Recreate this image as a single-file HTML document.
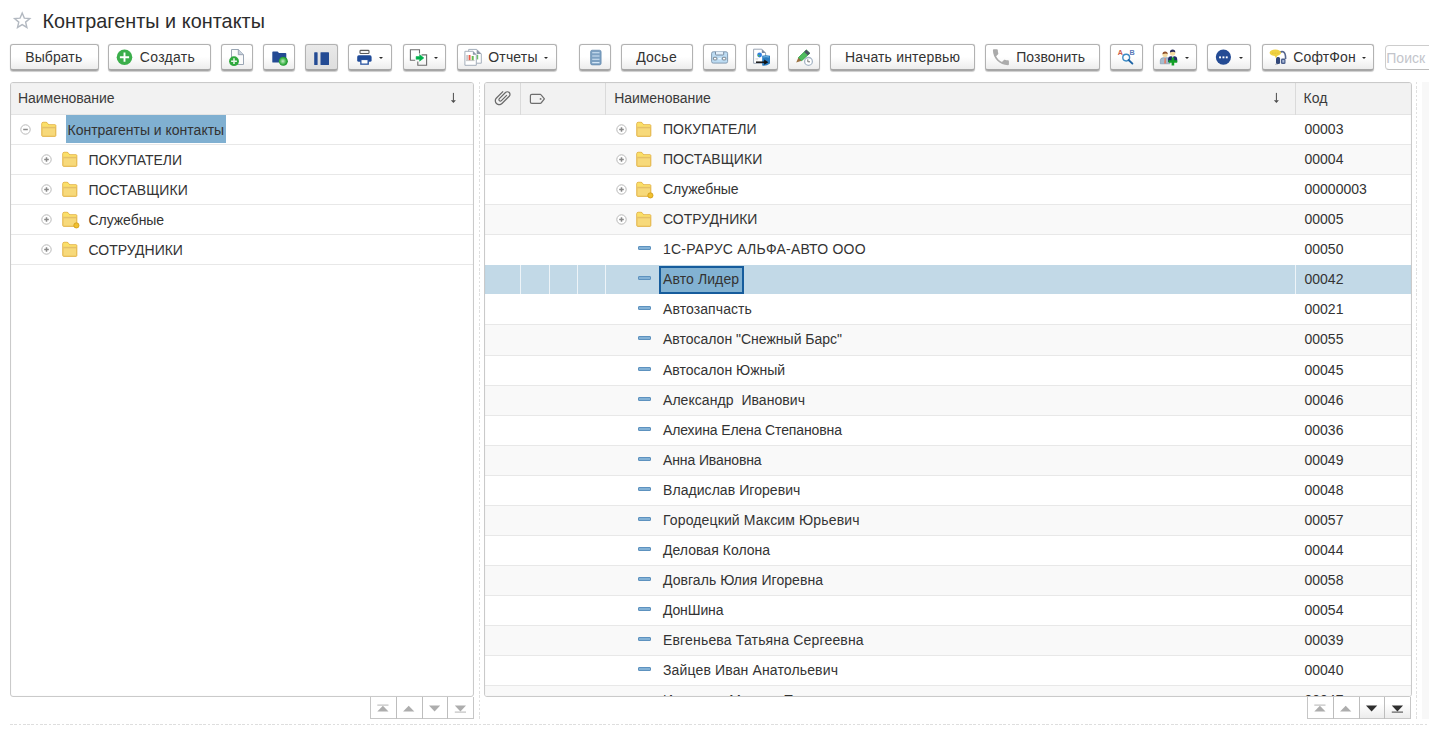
<!DOCTYPE html>
<html><head><meta charset="utf-8">
<style>
*{box-sizing:border-box}
html,body{margin:0;padding:0}
body{width:1429px;height:733px;overflow:hidden;background:#fff;position:relative;font-family:"Liberation Sans",sans-serif;font-size:14px;color:#333}
.a{position:absolute}
.t{position:absolute;white-space:pre;line-height:16px;font-size:14px}
.btn{position:absolute;top:44px;height:27px;border:1px solid #b2b2b2;border-bottom:2px solid #a6a6a6;border-radius:3px;background:linear-gradient(#fff 0,#fff 48%,#ededed 100%);box-shadow:0 0 0.8px rgba(0,0,0,0.22),0 0.6px 0.8px rgba(0,0,0,0.18)}
.btn.p{background:linear-gradient(#e9e9e9,#dedede)}
.dd{position:absolute;width:0;height:0;border-left:2.7px solid transparent;border-right:2.7px solid transparent;border-top:2.9px solid #2a2a2a;top:57.4px;margin-left:-0.2px}
.bt{position:absolute;top:49px;white-space:pre;line-height:16px;color:#333}
.tbl{position:absolute;top:82px;height:615px;border:1px solid #cacaca;border-radius:3px;background:#fff;overflow:hidden}
.hdr{position:absolute;left:0;right:0;top:0;height:32px;background:#f2f2f2;border-bottom:1px solid #e4e4e4}
.row{position:absolute;left:0;right:0;border-bottom:1px solid #e8e8e8}
.row.alt{background:#f9f9f9}
.sel{background:#c2d9e7}
.nav{position:absolute;top:696px;height:23px;border:1px solid #c4c4c4;border-top:none;background:#fff}
.nc{position:absolute;top:0;width:26px;height:22px;border-right:1px solid #c4c4c4}
</style></head><body>
<svg class="a" style="left:10px;top:9px;overflow:visible" width="25" height="22" viewBox="10 9 25 22"><path d="M22.20 13.00 L24.32 18.09 L29.81 18.53 L25.62 22.11 L26.90 27.47 L22.20 24.60 L17.50 27.47 L18.78 22.11 L14.59 18.53 L20.08 18.09 Z" fill="none" stroke="#b3b9c1" stroke-width="1.4" stroke-linejoin="miter"/></svg>
<div class="t" style="left:42.5px;top:9px;font-size:19.8px;line-height:24px;letter-spacing:0.05px;color:#2c2c2c">Контрагенты и контакты</div>
<div class="btn" style="left:10px;width:89px"></div>
<div class="bt" style="left:25.2px;letter-spacing:0.1px">Выбрать</div>
<div class="btn" style="left:108px;width:103px"></div>
<svg class="a" style="left:115px;top:48px;overflow:visible" width="19" height="19" viewBox="115 48 19 19"><circle cx="124.5" cy="57.2" r="7.8" fill="#3bae4b"/><path d="M124.5 52.6v9.2M119.9 57.2h9.2" stroke="#fff" stroke-width="1.9"/></svg>
<div class="bt" style="left:139.8px;letter-spacing:0.3px">Создать</div>
<div class="btn" style="left:221px;width:32px"></div>
<svg class="a" style="left:228px;top:47px;overflow:visible" width="18" height="20" viewBox="228 47 18 20"><path d="M231.5 49.5H238.3L243.5 54.7V64.5H231.5Z" fill="#fbfbfb" stroke="#9aa6b4" stroke-width="1"/><path d="M238.3 49.5V54.7H243.5" fill="#c6d0dc" stroke="#8a96a6" stroke-width="0.8"/><circle cx="234" cy="61.2" r="4.9" fill="#2ea83c"/><path d="M234 58.3v5.8M231.1 61.2h5.8" stroke="#e8f5e8" stroke-width="1.5"/></svg>
<div class="btn" style="left:263px;width:32px"></div>
<svg class="a" style="left:270px;top:49px;overflow:visible" width="20" height="18" viewBox="270 49 20 18"><path d="M272.3 52.2Q272.3 51.4 273.1 51.4H277.6L279 53H285.5Q286.3 53 286.3 53.8V61.9Q286.3 62.6 285.5 62.6H273.1Q272.3 62.6 272.3 61.9Z" fill="#244b94"/><circle cx="283.3" cy="61.2" r="4.5" fill="url(#gb)"/><defs><radialGradient id="gb" cx="0.45" cy="0.5" r="0.55"><stop offset="0" stop-color="#c8ecc8"/><stop offset="0.6" stop-color="#45b84f"/><stop offset="1" stop-color="#0e8a20"/></radialGradient></defs></svg>
<div class="btn p" style="left:305px;width:33px"></div>
<svg class="a" style="left:312px;top:50px;overflow:visible" width="19" height="17" viewBox="312 50 19 17"><rect x="314.2" y="52.2" width="3.4" height="12.8" rx="0.6" fill="#244b94"/><rect x="320.5" y="52.2" width="8.5" height="12.8" rx="0.6" fill="#244b94"/></svg>
<div class="btn" style="left:348px;width:44px"></div>
<div class="dd" style="left:379.5px"></div>
<svg class="a" style="left:355px;top:48px;overflow:visible" width="19" height="19" viewBox="355 48 19 19"><rect x="360" y="50.4" width="9" height="3.1" rx="0.8" fill="#f4f4f4" stroke="#5a5a5a" stroke-width="1.1"/><rect x="357.2" y="55.3" width="14.4" height="6.5" rx="1.6" fill="#1f4a98"/><path d="M360.2 59.4H368.9V64.8H360.2Z" fill="#2b55a2"/><rect x="361.5" y="60.1" width="6" height="3.4" fill="#fff"/></svg>
<div class="btn" style="left:403px;width:43px"></div>
<div class="dd" style="left:434.2px"></div>
<svg class="a" style="left:408px;top:47px;overflow:visible" width="22" height="20" viewBox="408 47 22 20"><path d="M419.5 53.6V49.7H410.4V60.2H415.2" fill="none" stroke="#6c6c6c" stroke-width="1.1"/><path d="M421.6 54.9H426.6V65.3H417.8V61.4" fill="none" stroke="#6c6c6c" stroke-width="1.1"/><path d="M416.1 56.5H419.6V54.6L423.9 57.9L419.6 61.2V59.3H416.1Z" fill="#00b04c" stroke="#00b04c" stroke-width="0.5" stroke-linejoin="round"/></svg>
<div class="btn" style="left:457px;width:100px"></div>
<div class="bt" style="left:488.3px;letter-spacing:0.15px">Отчеты</div>
<div class="dd" style="left:544.5px"></div>
<svg class="a" style="left:462px;top:47px;overflow:visible" width="22" height="20" viewBox="462 47 22 20"><path d="M468.7 49.4H476.7L481.3 54V63.2H468.7Z" fill="#fff" stroke="#a4aebb" stroke-width="1"/><path d="M476.7 49.4V54H481.3" fill="#8c98a8"/><rect x="476.6" y="54.8" width="1.6" height="4.6" fill="#6cc06c"/><path d="M464.9 51.3H472.9L476.3 54.7V65.3H464.9Z" fill="#fff" stroke="#a4aebb" stroke-width="1"/><path d="M472.9 51.3V54.7H476.3Z" fill="#8c98a8"/><rect x="466.3" y="55" width="1.6" height="5.3" fill="#c4c4c4"/><rect x="468.6" y="55" width="1.9" height="5.3" fill="#ea5a48"/><rect x="471.7" y="56" width="2" height="4.3" fill="#66bb55"/><path d="M466 60.6H474.6" stroke="#bdbdbd" stroke-width="0.8"/></svg>
<div class="btn" style="left:579px;width:32px"></div>
<svg class="a" style="left:588px;top:48px;overflow:visible" width="16" height="19" viewBox="588 48 16 19"><rect x="590.6" y="50.2" width="10.5" height="14.7" rx="1.6" fill="#7da1c2"/><g stroke="#d4e6f6" stroke-width="1.1"><path d="M592.2 52.7H599.5M592.2 56H599.5M592.2 59.3H599.5M592.2 62.6H599.5"/></g><rect x="590.6" y="50.2" width="10.5" height="14.7" rx="1.6" fill="none" stroke="#6288ad" stroke-width="0.7"/></svg>
<div class="btn" style="left:621px;width:72px"></div>
<div class="bt" style="left:636.2px;letter-spacing:0.25px">Досье</div>
<div class="btn" style="left:703px;width:33px"></div>
<svg class="a" style="left:709px;top:49px;overflow:visible" width="22" height="17" viewBox="709 49 22 17"><rect x="711.6" y="51.8" width="16" height="11.3" rx="1.6" fill="#bddcf3" stroke="#7b93aa" stroke-width="0.9"/><path d="M715.5 51.8V54.2Q715.5 55 716.3 55H722.9Q723.7 55 723.7 54.2V51.8" fill="#e4f0fa" stroke="#6e8298" stroke-width="0.9"/><rect x="713.4" y="57.3" width="3.4" height="2.6" rx="0.6" fill="#fff" stroke="#6e7a86" stroke-width="0.9"/><rect x="722.4" y="57.3" width="3.4" height="2.6" rx="0.6" fill="#fff" stroke="#6e7a86" stroke-width="0.9"/><path d="M718.2 58.6H721" stroke="#f0f8ff" stroke-width="1.4"/></svg>
<div class="btn" style="left:746px;width:32px"></div>
<svg class="a" style="left:751px;top:47px;overflow:visible" width="22" height="21" viewBox="751 47 22 21"><path d="M753.6 49.2H761.8L765.6 53V63.3H753.6Z" fill="#fff" stroke="#9aa6b4" stroke-width="1"/><path d="M761.8 49.2V53H765.6" fill="#7888a0"/><circle cx="759.6" cy="55" r="2.4" fill="#2f7fe0"/><circle cx="758.6" cy="55.6" r="0.9" fill="#58c040"/><path d="M755.5 58.5H758.5M755.5 59.7H758" stroke="#d0d0d0" stroke-width="0.6"/><path d="M762.2 55.8Q766 54.6 770 55.8V63.5Q766 66.5 762.2 65.6Z" fill="#2a7bbf"/><path d="M763.2 57Q766 56.3 769 57" stroke="#7ec0ea" stroke-width="0.9" fill="none"/><path d="M756 62.2H765.2" stroke="#111" stroke-width="1.5"/><path d="M764.2 59.6L768.4 62.2L764.2 64.8Z" fill="#111"/></svg>
<div class="btn" style="left:788px;width:32px"></div>
<svg class="a" style="left:794px;top:47px;overflow:visible" width="22" height="20" viewBox="794 47 22 20"><path d="M796.2 62.6L798.4 57.6L801.7 60.7Z" fill="#9a7040"/><path d="M798.4 57.6L806.3 49.9L809.9 53.2L801.7 60.7Z" fill="#4fbd60" stroke="#229a3a" stroke-width="0.7"/><path d="M804.2 51.9L806.3 49.7L810 53.2L807.8 55.3Z" fill="#4a5263"/><circle cx="808.5" cy="61.4" r="3.9" fill="#fff" stroke="#a7b6c6" stroke-width="1.3"/><path d="M807.8 59.4V61.8H810" fill="none" stroke="#666" stroke-width="0.9"/></svg>
<div class="btn" style="left:830px;width:145px"></div>
<div class="bt" style="left:845px;letter-spacing:0.17px">Начать интервью</div>
<div class="btn" style="left:985px;width:115px"></div>
<div class="bt" style="left:1016.2px;letter-spacing:0.05px">Позвонить</div>
<svg class="a" style="left:991px;top:48px;overflow:visible" width="20" height="19" viewBox="991 48 20 19"><path d="M6.62 10.79c1.44 2.83 3.76 5.14 6.59 6.59l2.2-2.2c.27-.27.67-.36 1.02-.24 1.12.37 2.33.57 3.57.57.55 0 1 .45 1 1V20c0 .55-.45 1-1 1-9.39 0-17-7.61-17-17 0-.55.45-1 1-1h3.5c.55 0 1 .45 1 1 0 1.25.2 2.45.57 3.57.11.35.03.74-.25 1.02l-2.2 2.2z" transform="translate(992.9 49.2) scale(0.89) translate(-3 -3)" fill="#ababab"/></svg>
<div class="btn" style="left:1110px;width:33px"></div>
<svg class="a" style="left:1116px;top:47px;overflow:visible" width="20" height="19" viewBox="1116 47 20 19"><text x="1117.8" y="54.8" font-family="Liberation Sans" font-size="7.2" font-weight="bold" fill="#cc5a48">A</text><text x="1129.6" y="54.8" font-family="Liberation Sans" font-size="7.2" font-weight="bold" fill="#5a7ab8">B</text><circle cx="1126.2" cy="57.6" r="3.4" fill="none" stroke="#3b8ac4" stroke-width="1.4"/><path d="M1128.6 60L1132.4 63.6" stroke="#1d64a6" stroke-width="1.9" stroke-linecap="round"/></svg>
<div class="btn" style="left:1153px;width:44px"></div>
<div class="dd" style="left:1184.7px"></div>
<svg class="a" style="left:1158px;top:48px;overflow:visible" width="22" height="19" viewBox="1158 48 22 19"><path d="M1160.3 63.8V60.6Q1160.3 57.9 1163 57.7H1167.2Q1169.9 57.9 1169.9 60.6V63.8Z" fill="#a6bccf" stroke="#7890a8" stroke-width="0.6"/><path d="M1164.6 58L1165.7 58L1166.2 63.6H1164.1Z" fill="#e0806a"/><circle cx="1165.1" cy="54.6" r="2.6" fill="#f5dca4"/><path d="M1162.5 54.2Q1162.5 51.4 1165.1 51.4Q1167.7 51.4 1167.7 54.2Q1166.2 52.6 1162.5 54.2Z" fill="#8e4e2a"/><path d="M1168.1 62V59.3Q1168.1 56.4 1171 56.2H1174.3Q1177.2 56.4 1177.2 59.3V62Z" fill="#1f2868"/><path d="M1171.6 56.2L1172.7 58.2L1173.8 56.2Z" fill="#fff"/><circle cx="1172.6" cy="53.1" r="2.7" fill="#f5dca4"/><path d="M1169.9 52.4Q1170 49.6 1172.6 49.6Q1175.3 49.6 1175.3 52.4Q1173.6 51.2 1169.9 52.4Z" fill="#2b2b5c"/><path d="M1171.6 57.4H1174.2V60.2H1177.2V62.8H1174.2V65.6H1171.6V62.8H1168.6V60.2H1171.6Z" fill="#13a126"/></svg>
<div class="btn" style="left:1207px;width:44px"></div>
<div class="dd" style="left:1239.2px"></div>
<svg class="a" style="left:1214px;top:48px;overflow:visible" width="19" height="19" viewBox="1214 48 19 19"><circle cx="1223.4" cy="57.1" r="7.6" fill="#244b94"/><rect x="1219.1" y="56.4" width="1.9" height="1.9" fill="#fff"/><rect x="1222.5" y="56.4" width="1.9" height="1.9" fill="#fff"/><rect x="1225.8" y="56.4" width="1.9" height="1.9" fill="#fff"/></svg>
<div class="btn" style="left:1262px;width:112px"></div>
<div class="bt" style="left:1293.2px;letter-spacing:0.15px">СофтФон</div>
<div class="dd" style="left:1362.3px"></div>
<svg class="a" style="left:1268px;top:48px;overflow:visible" width="20" height="19" viewBox="1268 48 20 19"><path d="M1277.5 64.5Q1276.3 63.8 1275.2 64.4" stroke="#9a9a9a" stroke-width="0.8" fill="none"/><path d="M1279.5 52.6Q1281.5 51.2 1283.2 51.8Q1285.8 53 1285.6 59" fill="none" stroke="#56668e" stroke-width="1.6"/><rect x="1276" y="57.1" width="4.1" height="6.9" rx="1.6" fill="#34497a"/><rect x="1281" y="58.6" width="4.5" height="5.4" rx="1.3" fill="#4a5e8c"/><rect x="1282.3" y="60" width="2" height="2.6" fill="#a8b8d8"/><ellipse cx="1275.3" cy="52.7" rx="5.7" ry="3.1" fill="#f0d244"/><path d="M1274 55L1276 58.2L1277.6 55Z" fill="#f0d244"/><path d="M1272 53.2H1278.8" stroke="#c8a828" stroke-width="0.5" stroke-dasharray="0.8 0.8"/></svg>
<div class="a" style="left:1384.5px;top:45px;width:60px;height:25px;border:1px solid #cdcdcd;border-bottom:1.5px solid #bdbdbd;border-radius:4px;background:#fff"></div>
<div class="bt" style="left:1386.3px;top:49.8px;color:#c3c5cb">Поиск</div>
<div class="tbl" style="left:10px;width:464px">
<div class="hdr"></div>
<div class="t" style="left:7px;top:7px;letter-spacing:-0.05px;color:#3a3a3a">Наименование</div>
<svg class="a" style="left:436px;top:8px" width="10" height="14" viewBox="0 0 10 14"><path d="M6.4 1.9V9.5" stroke="#4a4a4a" stroke-width="1"/><path d="M3.9 9.2H8.9L6.4 11.9Z" fill="#4a4a4a"/></svg>
<div class="row" style="top:32px;height:30px"></div>
<svg class="a" style="left:9.1px;top:41.0px" width="11" height="11" viewBox="0 0 11 11"><circle cx="5.5" cy="5.5" r="4.7" fill="#fff" stroke="#b8b8b8" stroke-width="1"/><path d="M3.2 5.5h4.6" stroke="#8a8a8a" stroke-width="1.5"/></svg>
<svg class="a" style="left:29.5px;top:39.0px;overflow:visible" width="17" height="16" viewBox="0 0 17 16"><path d="M0.8 13.6V1.8Q0.8 0.3 2.2 0.3H4.9Q5.9 0.3 6.7 1.4L7.6 2.8H14.1Q14.8 2.8 14.8 3.5V13.6Q14.8 14.3 14.1 14.3H1.5Q0.8 14.3 0.8 13.6Z" fill="#f7d97a" stroke="#e2b03e" stroke-width="1"/><path d="M1.3 1.8Q1.3 0.8 2.2 0.8H4.9Q5.6 0.8 6.2 1.6L7.3 3.3H14.3V4.8H1.3Z" fill="#fbe068"/><rect x="1.3" y="4.8" width="13" height="1.5" fill="#e4c068"/></svg>
<div class="a" style="left:55px;top:32px;width:160px;height:28px;background:#80b0d1"></div>
<div class="t" style="left:56.5px;top:38.5px;letter-spacing:0px">Контрагенты и контакты</div>
<div class="row" style="top:62px;height:30px"></div>
<svg class="a" style="left:30.1px;top:71.0px" width="11" height="11" viewBox="0 0 11 11"><circle cx="5.5" cy="5.5" r="4.7" fill="#fff" stroke="#b8b8b8" stroke-width="1"/><path d="M3.2 5.5h4.6M5.5 3.2v4.6" stroke="#8a8a8a" stroke-width="1.5"/></svg>
<svg class="a" style="left:50.5px;top:69.0px;overflow:visible" width="17" height="16" viewBox="0 0 17 16"><path d="M0.8 13.6V1.8Q0.8 0.3 2.2 0.3H4.9Q5.9 0.3 6.7 1.4L7.6 2.8H14.1Q14.8 2.8 14.8 3.5V13.6Q14.8 14.3 14.1 14.3H1.5Q0.8 14.3 0.8 13.6Z" fill="#f7d97a" stroke="#e2b03e" stroke-width="1"/><path d="M1.3 1.8Q1.3 0.8 2.2 0.8H4.9Q5.6 0.8 6.2 1.6L7.3 3.3H14.3V4.8H1.3Z" fill="#fbe068"/><rect x="1.3" y="4.8" width="13" height="1.5" fill="#e4c068"/></svg>
<div class="t" style="left:77.5px;top:68.5px;letter-spacing:0px">ПОКУПАТЕЛИ</div>
<div class="row" style="top:92px;height:30px"></div>
<svg class="a" style="left:30.1px;top:101.0px" width="11" height="11" viewBox="0 0 11 11"><circle cx="5.5" cy="5.5" r="4.7" fill="#fff" stroke="#b8b8b8" stroke-width="1"/><path d="M3.2 5.5h4.6M5.5 3.2v4.6" stroke="#8a8a8a" stroke-width="1.5"/></svg>
<svg class="a" style="left:50.5px;top:99.0px;overflow:visible" width="17" height="16" viewBox="0 0 17 16"><path d="M0.8 13.6V1.8Q0.8 0.3 2.2 0.3H4.9Q5.9 0.3 6.7 1.4L7.6 2.8H14.1Q14.8 2.8 14.8 3.5V13.6Q14.8 14.3 14.1 14.3H1.5Q0.8 14.3 0.8 13.6Z" fill="#f7d97a" stroke="#e2b03e" stroke-width="1"/><path d="M1.3 1.8Q1.3 0.8 2.2 0.8H4.9Q5.6 0.8 6.2 1.6L7.3 3.3H14.3V4.8H1.3Z" fill="#fbe068"/><rect x="1.3" y="4.8" width="13" height="1.5" fill="#e4c068"/></svg>
<div class="t" style="left:77.5px;top:98.5px;letter-spacing:0.05px">ПОСТАВЩИКИ</div>
<div class="row" style="top:122px;height:30px"></div>
<svg class="a" style="left:30.1px;top:131.0px" width="11" height="11" viewBox="0 0 11 11"><circle cx="5.5" cy="5.5" r="4.7" fill="#fff" stroke="#b8b8b8" stroke-width="1"/><path d="M3.2 5.5h4.6M5.5 3.2v4.6" stroke="#8a8a8a" stroke-width="1.5"/></svg>
<svg class="a" style="left:50.5px;top:129.0px;overflow:visible" width="17" height="16" viewBox="0 0 17 16"><path d="M0.8 13.6V1.8Q0.8 0.3 2.2 0.3H4.9Q5.9 0.3 6.7 1.4L7.6 2.8H14.1Q14.8 2.8 14.8 3.5V13.6Q14.8 14.3 14.1 14.3H1.5Q0.8 14.3 0.8 13.6Z" fill="#f7d97a" stroke="#e2b03e" stroke-width="1"/><path d="M1.3 1.8Q1.3 0.8 2.2 0.8H4.9Q5.6 0.8 6.2 1.6L7.3 3.3H14.3V4.8H1.3Z" fill="#fbe068"/><rect x="1.3" y="4.8" width="13" height="1.5" fill="#e4c068"/><circle cx="14.4" cy="13.4" r="2.6" fill="#f0c030" stroke="#d09a16" stroke-width="0.8"/></svg>
<div class="t" style="left:77.5px;top:128.5px;letter-spacing:-0.05px">Служебные</div>
<div class="row" style="top:152px;height:30px"></div>
<svg class="a" style="left:30.1px;top:161.0px" width="11" height="11" viewBox="0 0 11 11"><circle cx="5.5" cy="5.5" r="4.7" fill="#fff" stroke="#b8b8b8" stroke-width="1"/><path d="M3.2 5.5h4.6M5.5 3.2v4.6" stroke="#8a8a8a" stroke-width="1.5"/></svg>
<svg class="a" style="left:50.5px;top:159.0px;overflow:visible" width="17" height="16" viewBox="0 0 17 16"><path d="M0.8 13.6V1.8Q0.8 0.3 2.2 0.3H4.9Q5.9 0.3 6.7 1.4L7.6 2.8H14.1Q14.8 2.8 14.8 3.5V13.6Q14.8 14.3 14.1 14.3H1.5Q0.8 14.3 0.8 13.6Z" fill="#f7d97a" stroke="#e2b03e" stroke-width="1"/><path d="M1.3 1.8Q1.3 0.8 2.2 0.8H4.9Q5.6 0.8 6.2 1.6L7.3 3.3H14.3V4.8H1.3Z" fill="#fbe068"/><rect x="1.3" y="4.8" width="13" height="1.5" fill="#e4c068"/></svg>
<div class="t" style="left:77.5px;top:158.5px;letter-spacing:0px">СОТРУДНИКИ</div>
<div class="a" style="left:0;top:0;right:0;bottom:0;box-shadow:inset 0 0 1.2px rgba(0,0,0,0.10)"></div>
</div>
<div class="tbl" style="left:484px;width:928px">
<div class="hdr"></div>
<div class="a" style="left:35px;top:0;width:1px;height:32px;background:#dadada"></div>
<div class="a" style="left:120px;top:0;width:1px;height:32px;background:#dadada"></div>
<div class="a" style="left:810px;top:0;width:1px;height:32px;background:#dadada"></div>
<svg class="a" style="left:9px;top:6px;overflow:visible" width="18" height="18" viewBox="0 0 18 18"><g transform="translate(8.4 8.6) rotate(45) scale(-0.82 0.82) translate(-12.5 -12)"><path d="M16.5 6v11.5c0 2.21-1.79 4-4 4s-4-1.79-4-4V5c0-1.38 1.12-2.5 2.5-2.5s2.5 1.12 2.5 2.5v10.5c0 .55-.45 1-1 1s-1-.45-1-1V6H10v9.5c0 1.38 1.120 2.5 2.5 2.5s2.5-1.12 2.5-2.5V5c0-2.21-1.790-4-4-4S7 2.79 7 5v12.5c0 3.04 2.46 5.5 5.5 5.5s5.5-2.46 5.5-5.5V6h-1.5z" fill="#6a6a6a"/></g></svg>
<svg class="a" style="left:44px;top:10px" width="18" height="12" viewBox="0 0 18 12"><path d="M2.8 1.4H11.3Q11.8 1.4 12.1 1.8L15.4 5.9L12.1 10Q11.8 10.4 11.3 10.4H2.8Q1.4 10.4 1.4 9V2.8Q1.4 1.4 2.8 1.4Z" fill="none" stroke="#6e6e6e" stroke-width="1.2" stroke-linejoin="round"/><circle cx="11.6" cy="5.9" r="0.95" fill="#6e6e6e"/></svg>
<div class="t" style="left:129.2px;top:7px;letter-spacing:-0.05px;color:#3a3a3a">Наименование</div>
<svg class="a" style="left:785px;top:8px" width="10" height="14" viewBox="0 0 10 14"><path d="M6.4 1.9V9.5" stroke="#4a4a4a" stroke-width="1"/><path d="M3.9 9.2H8.9L6.4 11.9Z" fill="#4a4a4a"/></svg>
<div class="t" style="left:818.5px;top:7px;color:#3a3a3a">Код</div>
<div class="row" style="top:32px;height:30px"></div>
<svg class="a" style="left:131.4px;top:40.8px" width="11" height="11" viewBox="0 0 11 11"><circle cx="5.5" cy="5.5" r="4.7" fill="#fff" stroke="#b8b8b8" stroke-width="1"/><path d="M3.2 5.5h4.6M5.5 3.2v4.6" stroke="#8a8a8a" stroke-width="1.5"/></svg>
<svg class="a" style="left:151.4px;top:39.0px;overflow:visible" width="17" height="16" viewBox="0 0 17 16"><path d="M0.8 13.6V1.8Q0.8 0.3 2.2 0.3H4.9Q5.9 0.3 6.7 1.4L7.6 2.8H14.1Q14.8 2.8 14.8 3.5V13.6Q14.8 14.3 14.1 14.3H1.5Q0.8 14.3 0.8 13.6Z" fill="#f7d97a" stroke="#e2b03e" stroke-width="1"/><path d="M1.3 1.8Q1.3 0.8 2.2 0.8H4.9Q5.6 0.8 6.2 1.6L7.3 3.3H14.3V4.8H1.3Z" fill="#fbe068"/><rect x="1.3" y="4.8" width="13" height="1.5" fill="#e4c068"/></svg>
<div class="t" style="left:178px;top:38px;letter-spacing:0px">ПОКУПАТЕЛИ</div>
<div class="t" style="left:819.5px;top:38px">00003</div>
<div class="row alt" style="top:62px;height:30px"></div>
<svg class="a" style="left:131.4px;top:70.8px" width="11" height="11" viewBox="0 0 11 11"><circle cx="5.5" cy="5.5" r="4.7" fill="#fff" stroke="#b8b8b8" stroke-width="1"/><path d="M3.2 5.5h4.6M5.5 3.2v4.6" stroke="#8a8a8a" stroke-width="1.5"/></svg>
<svg class="a" style="left:151.4px;top:69.0px;overflow:visible" width="17" height="16" viewBox="0 0 17 16"><path d="M0.8 13.6V1.8Q0.8 0.3 2.2 0.3H4.9Q5.9 0.3 6.7 1.4L7.6 2.8H14.1Q14.8 2.8 14.8 3.5V13.6Q14.8 14.3 14.1 14.3H1.5Q0.8 14.3 0.8 13.6Z" fill="#f7d97a" stroke="#e2b03e" stroke-width="1"/><path d="M1.3 1.8Q1.3 0.8 2.2 0.8H4.9Q5.6 0.8 6.2 1.6L7.3 3.3H14.3V4.8H1.3Z" fill="#fbe068"/><rect x="1.3" y="4.8" width="13" height="1.5" fill="#e4c068"/></svg>
<div class="t" style="left:178px;top:68px;letter-spacing:0.05px">ПОСТАВЩИКИ</div>
<div class="t" style="left:819.5px;top:68px">00004</div>
<div class="row" style="top:92px;height:30px"></div>
<svg class="a" style="left:131.4px;top:100.8px" width="11" height="11" viewBox="0 0 11 11"><circle cx="5.5" cy="5.5" r="4.7" fill="#fff" stroke="#b8b8b8" stroke-width="1"/><path d="M3.2 5.5h4.6M5.5 3.2v4.6" stroke="#8a8a8a" stroke-width="1.5"/></svg>
<svg class="a" style="left:151.4px;top:99.0px;overflow:visible" width="17" height="16" viewBox="0 0 17 16"><path d="M0.8 13.6V1.8Q0.8 0.3 2.2 0.3H4.9Q5.9 0.3 6.7 1.4L7.6 2.8H14.1Q14.8 2.8 14.8 3.5V13.6Q14.8 14.3 14.1 14.3H1.5Q0.8 14.3 0.8 13.6Z" fill="#f7d97a" stroke="#e2b03e" stroke-width="1"/><path d="M1.3 1.8Q1.3 0.8 2.2 0.8H4.9Q5.6 0.8 6.2 1.6L7.3 3.3H14.3V4.8H1.3Z" fill="#fbe068"/><rect x="1.3" y="4.8" width="13" height="1.5" fill="#e4c068"/><circle cx="14.4" cy="13.4" r="2.6" fill="#f0c030" stroke="#d09a16" stroke-width="0.8"/></svg>
<div class="t" style="left:178px;top:98px;letter-spacing:-0.05px">Служебные</div>
<div class="t" style="left:819.5px;top:98px">00000003</div>
<div class="row alt" style="top:122px;height:30px"></div>
<svg class="a" style="left:131.4px;top:130.8px" width="11" height="11" viewBox="0 0 11 11"><circle cx="5.5" cy="5.5" r="4.7" fill="#fff" stroke="#b8b8b8" stroke-width="1"/><path d="M3.2 5.5h4.6M5.5 3.2v4.6" stroke="#8a8a8a" stroke-width="1.5"/></svg>
<svg class="a" style="left:151.4px;top:129.0px;overflow:visible" width="17" height="16" viewBox="0 0 17 16"><path d="M0.8 13.6V1.8Q0.8 0.3 2.2 0.3H4.9Q5.9 0.3 6.7 1.4L7.6 2.8H14.1Q14.8 2.8 14.8 3.5V13.6Q14.8 14.3 14.1 14.3H1.5Q0.8 14.3 0.8 13.6Z" fill="#f7d97a" stroke="#e2b03e" stroke-width="1"/><path d="M1.3 1.8Q1.3 0.8 2.2 0.8H4.9Q5.6 0.8 6.2 1.6L7.3 3.3H14.3V4.8H1.3Z" fill="#fbe068"/><rect x="1.3" y="4.8" width="13" height="1.5" fill="#e4c068"/></svg>
<div class="t" style="left:178px;top:128px;letter-spacing:0px">СОТРУДНИКИ</div>
<div class="t" style="left:819.5px;top:128px">00005</div>
<div class="row" style="top:152px;height:30px"></div>
<div class="a" style="left:153px;top:162.5px;width:13px;height:4px;background:#84b2d6;border:1px solid #5d92bf;border-radius:1px"></div>
<div class="t" style="left:178px;top:158px;letter-spacing:0.22px">1С-РАРУС АЛЬФА-АВТО ООО</div>
<div class="t" style="left:819.5px;top:158px">00050</div>
<div class="a" style="left:0;right:0;top:181px;height:31px;background:#fff"></div>
<div class="a sel" style="left:0;right:0;top:182px;height:29px"></div>
<div class="a" style="left:35px;top:182px;width:1px;height:29px;background:#eef4f8"></div>
<div class="a" style="left:64px;top:182px;width:1px;height:29px;background:#eef4f8"></div>
<div class="a" style="left:92px;top:182px;width:1px;height:29px;background:#eef4f8"></div>
<div class="a" style="left:120px;top:182px;width:1px;height:29px;background:#eef4f8"></div>
<div class="a" style="left:810px;top:182px;width:1px;height:29px;background:#eef4f8"></div>
<div class="a" style="left:153px;top:192.5px;width:13px;height:4px;background:#84b2d6;border:1px solid #5d92bf;border-radius:1px"></div>
<div class="a" style="left:174px;top:182.5px;width:85px;height:28.5px;background:#82b2d2;border:2px solid #165c9c"></div>
<div class="t" style="left:178px;top:188px;letter-spacing:0.1px">Авто Лидер</div>
<div class="t" style="left:819.5px;top:188px">00042</div>
<div class="row" style="top:212px;height:30px"></div>
<div class="a" style="left:153px;top:222.5px;width:13px;height:4px;background:#84b2d6;border:1px solid #5d92bf;border-radius:1px"></div>
<div class="t" style="left:178px;top:218px;letter-spacing:0.09px">Автозапчасть</div>
<div class="t" style="left:819.5px;top:218px">00021</div>
<div class="row alt" style="top:242px;height:31px"></div>
<div class="a" style="left:153px;top:252.5px;width:13px;height:4px;background:#84b2d6;border:1px solid #5d92bf;border-radius:1px"></div>
<div class="t" style="left:178px;top:248px;letter-spacing:0px">Автосалон "Снежный Барс"</div>
<div class="t" style="left:819.5px;top:248px">00055</div>
<div class="row" style="top:273px;height:30px"></div>
<div class="a" style="left:153px;top:283.5px;width:13px;height:4px;background:#84b2d6;border:1px solid #5d92bf;border-radius:1px"></div>
<div class="t" style="left:178px;top:279px;letter-spacing:0px">Автосалон Южный</div>
<div class="t" style="left:819.5px;top:279px">00045</div>
<div class="row alt" style="top:303px;height:30px"></div>
<div class="a" style="left:153px;top:313.5px;width:13px;height:4px;background:#84b2d6;border:1px solid #5d92bf;border-radius:1px"></div>
<div class="t" style="left:178px;top:309px;letter-spacing:0.05px">Александр  Иванович</div>
<div class="t" style="left:819.5px;top:309px">00046</div>
<div class="row" style="top:333px;height:30px"></div>
<div class="a" style="left:153px;top:343.5px;width:13px;height:4px;background:#84b2d6;border:1px solid #5d92bf;border-radius:1px"></div>
<div class="t" style="left:178px;top:339px;letter-spacing:-0.13px">Алехина Елена Степановна</div>
<div class="t" style="left:819.5px;top:339px">00036</div>
<div class="row alt" style="top:363px;height:30px"></div>
<div class="a" style="left:153px;top:373.5px;width:13px;height:4px;background:#84b2d6;border:1px solid #5d92bf;border-radius:1px"></div>
<div class="t" style="left:178px;top:369px;letter-spacing:-0.12px">Анна Ивановна</div>
<div class="t" style="left:819.5px;top:369px">00049</div>
<div class="row" style="top:393px;height:30px"></div>
<div class="a" style="left:153px;top:403.5px;width:13px;height:4px;background:#84b2d6;border:1px solid #5d92bf;border-radius:1px"></div>
<div class="t" style="left:178px;top:399px;letter-spacing:0.06px">Владислав Игоревич</div>
<div class="t" style="left:819.5px;top:399px">00048</div>
<div class="row alt" style="top:423px;height:30px"></div>
<div class="a" style="left:153px;top:433.5px;width:13px;height:4px;background:#84b2d6;border:1px solid #5d92bf;border-radius:1px"></div>
<div class="t" style="left:178px;top:429px;letter-spacing:0.14px">Городецкий Максим Юрьевич</div>
<div class="t" style="left:819.5px;top:429px">00057</div>
<div class="row" style="top:453px;height:30px"></div>
<div class="a" style="left:153px;top:463.5px;width:13px;height:4px;background:#84b2d6;border:1px solid #5d92bf;border-radius:1px"></div>
<div class="t" style="left:178px;top:459px;letter-spacing:0.03px">Деловая Колона</div>
<div class="t" style="left:819.5px;top:459px">00044</div>
<div class="row alt" style="top:483px;height:30px"></div>
<div class="a" style="left:153px;top:493.5px;width:13px;height:4px;background:#84b2d6;border:1px solid #5d92bf;border-radius:1px"></div>
<div class="t" style="left:178px;top:489px;letter-spacing:0.05px">Довгаль Юлия Игоревна</div>
<div class="t" style="left:819.5px;top:489px">00058</div>
<div class="row" style="top:513px;height:30px"></div>
<div class="a" style="left:153px;top:523.5px;width:13px;height:4px;background:#84b2d6;border:1px solid #5d92bf;border-radius:1px"></div>
<div class="t" style="left:178px;top:519px;letter-spacing:-0.15px">ДонШина</div>
<div class="t" style="left:819.5px;top:519px">00054</div>
<div class="row alt" style="top:543px;height:30px"></div>
<div class="a" style="left:153px;top:553.5px;width:13px;height:4px;background:#84b2d6;border:1px solid #5d92bf;border-radius:1px"></div>
<div class="t" style="left:178px;top:549px;letter-spacing:0.17px">Евгеньева Татьяна Сергеевна</div>
<div class="t" style="left:819.5px;top:549px">00039</div>
<div class="row" style="top:573px;height:30px"></div>
<div class="a" style="left:153px;top:583.5px;width:13px;height:4px;background:#84b2d6;border:1px solid #5d92bf;border-radius:1px"></div>
<div class="t" style="left:178px;top:579px;letter-spacing:0.14px">Зайцев Иван Анатольевич</div>
<div class="t" style="left:819.5px;top:579px">00040</div>
<div class="row alt" style="top:603px;height:31px"></div>
<div class="a" style="left:153px;top:613.5px;width:13px;height:4px;background:#84b2d6;border:1px solid #5d92bf;border-radius:1px"></div>
<div class="t" style="left:178px;top:609px;letter-spacing:0px">Иваненко Максим Петрович</div>
<div class="t" style="left:819.5px;top:609px">00047</div>
<div class="a" style="left:0;top:0;right:0;bottom:0;box-shadow:inset 0 0 1.2px rgba(0,0,0,0.10)"></div>
</div>
<div class="a" style="left:370px;top:697px;width:104px;height:22px;border:1px solid #c6c6c6;border-top:none;background:#fff"></div>
<div class="a" style="left:395.8px;top:697px;width:1px;height:22px;background:#bdbdbd"></div>
<div class="a" style="left:421.6px;top:697px;width:1px;height:22px;background:#bdbdbd"></div>
<div class="a" style="left:447.4px;top:697px;width:1px;height:22px;background:#bdbdbd"></div>
<svg class="a" style="left:374px;top:700px;overflow:visible" width="20" height="16" viewBox="374 700 20 16"><path d="M377.3 711.5L382.9 705.7L388.5 711.5Z" fill="#adadad"/><path d="M377.3 705.1H388.5" stroke="#adadad" stroke-width="0.9"/></svg>
<svg class="a" style="left:400px;top:700px;overflow:visible" width="20" height="16" viewBox="400 700 20 16"><path d="M403.1 711.5L408.7 705.7L414.3 711.5Z" fill="#adadad"/></svg>
<svg class="a" style="left:426px;top:700px;overflow:visible" width="20" height="16" viewBox="426 700 20 16"><path d="M429 705.6L434.6 711.4L440.2 705.6Z" fill="#adadad"/></svg>
<svg class="a" style="left:452px;top:700px;overflow:visible" width="20" height="16" viewBox="452 700 20 16"><path d="M454.8 705.6L460.4 711.4L466 705.6Z" fill="#adadad"/><path d="M454.8 712.1H466" stroke="#adadad" stroke-width="0.9"/></svg>
<div class="a" style="left:1307px;top:697px;width:104px;height:22px;border:1px solid #c6c6c6;border-top:none;background:#fff"></div>
<div class="a" style="left:1359.6px;top:697px;width:24.3px;height:21px;background:linear-gradient(#fff 30%,#ececec)"></div>
<div class="a" style="left:1385.4px;top:697px;width:25.1px;height:21px;background:linear-gradient(#fff 30%,#ececec)"></div>
<div class="a" style="left:1332.8px;top:697px;width:1px;height:22px;background:#bdbdbd"></div>
<div class="a" style="left:1358.6px;top:697px;width:1px;height:22px;background:#bdbdbd"></div>
<div class="a" style="left:1384.4px;top:697px;width:1px;height:22px;background:#bdbdbd"></div>
<svg class="a" style="left:1311px;top:700px;overflow:visible" width="20" height="16" viewBox="1311 700 20 16"><path d="M1314.3 711.5L1319.9 705.7L1325.5 711.5Z" fill="#adadad"/><path d="M1314.3 705.1H1325.5" stroke="#adadad" stroke-width="0.9"/></svg>
<svg class="a" style="left:1337px;top:700px;overflow:visible" width="20" height="16" viewBox="1337 700 20 16"><path d="M1340.1 711.5L1345.7 705.7L1351.3 711.5Z" fill="#adadad"/></svg>
<svg class="a" style="left:1363px;top:700px;overflow:visible" width="20" height="16" viewBox="1363 700 20 16"><path d="M1366 705.6L1371.6 711.4L1377.2 705.6Z" fill="#2e2e2e"/></svg>
<svg class="a" style="left:1389px;top:700px;overflow:visible" width="20" height="16" viewBox="1389 700 20 16"><path d="M1391.8 705.6L1397.4 711.4L1403 705.6Z" fill="#2e2e2e"/><path d="M1391.8 712.1H1403" stroke="#2e2e2e" stroke-width="0.9"/></svg>
<div class="a" style="left:1422px;top:82px;width:7px;height:637px;background:#f8f8f8"></div>
<div class="a" style="left:479px;top:82px;width:1px;height:637px;background:repeating-linear-gradient(#e0e0e0 0 2.4px,transparent 2.4px 4.23px)"></div>
<div class="a" style="left:1416px;top:82px;width:1px;height:637px;background:repeating-linear-gradient(#e0e0e0 0 2.4px,transparent 2.4px 4.23px)"></div>
<div class="a" style="left:10px;top:724px;width:1419px;height:1px;background:repeating-linear-gradient(90deg,#dedede 0 2.6px,transparent 2.6px 4.3px)"></div>
</body></html>
